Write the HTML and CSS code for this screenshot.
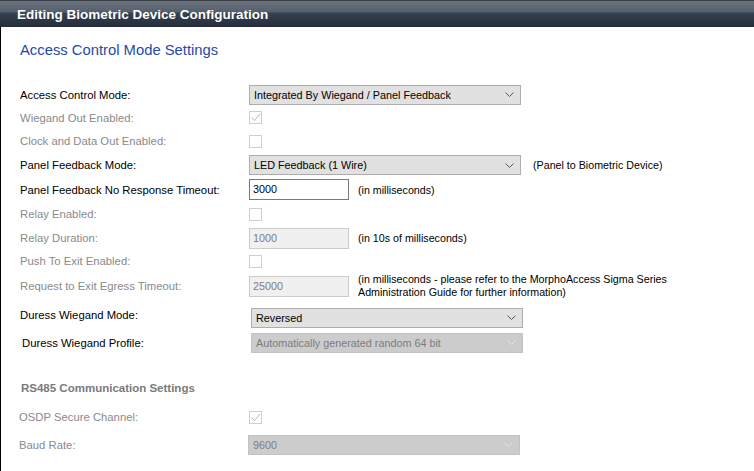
FILE: index.html
```html
<!DOCTYPE html>
<html>
<head>
<meta charset="utf-8">
<link rel="stylesheet" href="styles.css">
</head>
<body>
<div class="header">Editing Biometric Device Configuration</div>
<div class="page">
  <h2 class="section-title">Access Control Mode Settings</h2>
  <div class="form">
    <div class="row r23">
      <div class="label">Access Control Mode:</div>
      <div class="select"><span>Integrated By Wiegand / Panel Feedback</span><svg class="chev" width="9" height="5" viewBox="0 0 9 5"><path d="M0.5 0.5 L4.5 4.5 L8.5 0.5" fill="none" stroke="#555" stroke-width="1"/></svg></div>
    </div>
    <div class="row r23">
      <div class="label dis">Wiegand Out Enabled:</div>
      <div class="check"><svg width="11" height="11" viewBox="0 0 11 11"><path d="M1.5 5.5 L4.5 8.5 L10 2" fill="none" stroke="#b5b5b5" stroke-width="1"/></svg></div>
    </div>
    <div class="row r24">
      <div class="label dis">Clock and Data Out Enabled:</div>
      <div class="check"></div>
    </div>
    <div class="row r24">
      <div class="label">Panel Feedback Mode:</div>
      <div class="select"><span>LED Feedback (1 Wire)</span><svg class="chev" width="9" height="5" viewBox="0 0 9 5"><path d="M0.5 0.5 L4.5 4.5 L8.5 0.5" fill="none" stroke="#555" stroke-width="1"/></svg></div>
      <div class="note">(Panel to Biometric Device)</div>
    </div>
    <div class="row r25">
      <div class="label">Panel Feedback No Response Timeout:</div>
      <div class="input">3000</div>
      <div class="note n2">(in milliseconds)</div>
    </div>
    <div class="row r24">
      <div class="label dis">Relay Enabled:</div>
      <div class="check"></div>
    </div>
    <div class="row r24">
      <div class="label dis">Relay Duration:</div>
      <div class="input disabled">1000</div>
      <div class="note n2">(in 10s of milliseconds)</div>
    </div>
    <div class="row r22">
      <div class="label dis">Push To Exit Enabled:</div>
      <div class="check"></div>
    </div>
    <div class="row r28 gap">
      <div class="label dis">Request to Exit Egress Timeout:</div>
      <div class="input disabled">25000</div>
      <div class="note n2 multi">(in milliseconds - please refer to the MorphoAccess Sigma Series<br>Administration Guide for further information)</div>
    </div>
    <div class="row r25 shift">
      <div class="label up">Duress Wiegand Mode:</div>
      <div class="select"><span>Reversed</span><svg class="chev" width="9" height="5" viewBox="0 0 9 5"><path d="M0.5 0.5 L4.5 4.5 L8.5 0.5" fill="none" stroke="#555" stroke-width="1"/></svg></div>
    </div>
    <div class="row r25 shift">
      <div class="label ind">Duress Wiegand Profile:</div>
      <div class="select disabled"><span>Automatically generated random 64 bit</span><svg class="chev" width="9" height="5" viewBox="0 0 9 5"><path d="M0.5 0.5 L4.5 4.5 L8.5 0.5" fill="none" stroke="#e4e4e4" stroke-width="1"/></svg></div>
    </div>
  </div>

  <h3 class="sub-title">RS485 Communication Settings</h3>
  <div class="form rs">
    <div class="row r28">
      <div class="label dis">OSDP Secure Channel:</div>
      <div class="check"><svg width="11" height="11" viewBox="0 0 11 11"><path d="M1.5 5.5 L4.5 8.5 L10 2" fill="none" stroke="#b5b5b5" stroke-width="1"/></svg></div>
    </div>
    <div class="row r27">
      <div class="label dis">Baud Rate:</div>
      <div class="select disabled"><span>9600</span><svg class="chev" width="9" height="5" viewBox="0 0 9 5"><path d="M0.5 0.5 L4.5 4.5 L8.5 0.5" fill="none" stroke="#e4e4e4" stroke-width="1"/></svg></div>
    </div>
  </div>
</div>
</body>
</html>
```
FILE: styles.css
```css
html, body {
  margin: 0;
  padding: 0;
  background: #fff;
  font-family: "Liberation Sans", Arial, sans-serif;
  font-size: 11.3px;
  color: #000;
}
.header {
  height: 27px;
  box-sizing: border-box;
  padding-left: 17px;
  line-height: 28px;
  color: #fff;
  font-weight: bold;
  font-size: 13.5px;
  background: linear-gradient(#6a737e 0, #56606c 11px, #37424f 12px, #222b39 27px);
  border-top: 1px solid #3a3f46;
}
.page {
  border-left: 1px solid #000;
  padding-left: 19px;
  padding-top: 14px;
  min-height: 444px;
  box-sizing: border-box;
}
.section-title {
  margin: 0;
  font-weight: normal;
  font-size: 14.8px;
  color: #1f4aa8;
  height: 18px;
  line-height: 18px;
}
.form {
  margin-top: 24px;
  display: flex;
  flex-direction: column;
}
.row {
  display: flex;
  align-items: center;
  height: 24px;
}
.r22 { height: 22px; }
.r23 { height: 23px; }
.r24 { height: 24px; }
.r25 { height: 25px; }
.r26 { height: 26px; }
.r27 { height: 27px; }
.r28 { height: 28px; }
.gap { margin-bottom: 5px; }
.shift .select { margin-left: 2px; }
.label {
  width: 229px;
  flex: none;
  color: #000;
}
.label.up { position: relative; top: -3px; }
.label.ind { padding-left: 2px; width: 227px; }
.label.dis { color: #8a8a8a; }
.select {
  width: 272px;
  height: 20px;
  box-sizing: border-box;
  border: 1px solid #adadad;
  background: #e1e1e1;
  display: flex;
  align-items: center;
  justify-content: space-between;
  padding: 0 6px 0 4px;
  font-size: 10.8px;
}
.select.disabled {
  background: #cccccc;
  border-color: #c2c2c2;
  color: #7d7d7d;
}
.chev { flex: none; }
.check {
  width: 13px;
  height: 13px;
  box-sizing: border-box;
  border: 1px solid #cfcfcf;
  background: #fff;
  display: flex;
  align-items: center;
  justify-content: center;
}
.input {
  width: 100px;
  height: 21px;
  box-sizing: border-box;
  border: 1px solid #7a7a7a;
  background: #fff;
  padding-left: 3px;
  line-height: 19px;
  font-size: 10.8px;
}
.input.disabled {
  border-color: #cccccc;
  background: #f0f0f0;
  color: #7d7d7d;
}
.note {
  margin-left: 12px;
  font-size: 10.7px;
}
.note.n2 { margin-left: 9px; }
.note.multi { line-height: 13px; }
.sub-title {
  margin: 25px 0 0 1px;
  font-size: 11.5px;
  font-weight: bold;
  color: #7a7a7a;
  height: 16px;
  line-height: 16px;
}
.form.rs {
  margin-top: 7px;
  margin-left: -1px;
}
.rs .check { margin-left: 1px; }
```
